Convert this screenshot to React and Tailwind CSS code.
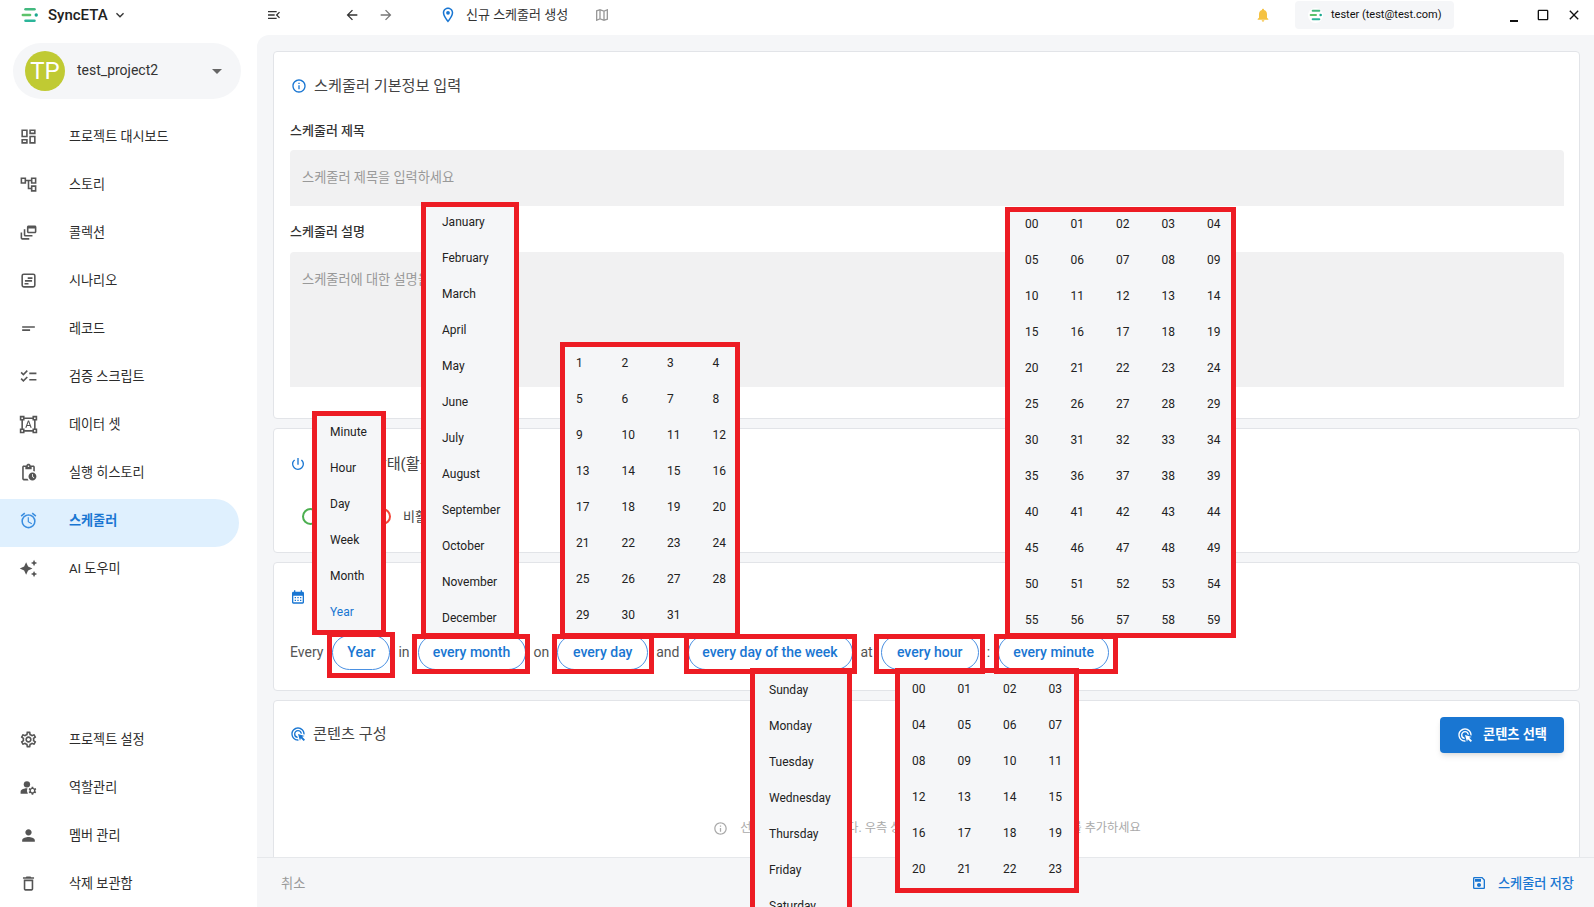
// Schedule creation screen with cron dropdowns annotated in red
import {
  MdOutlineDashboard, MdOutlineAccountTree, MdOutlineDynamicFeed, MdOutlineShortText,
  MdOutlineChecklist, MdOutlineFormatShapes, MdOutlinePendingActions, MdOutlineAlarm, MdAutoAwesome,
  MdOutlineSettings, MdManageAccounts, MdPerson, MdOutlineDelete, MdOutlineMenuOpen, MdArrowBack,
  MdArrowForward, MdOutlineLocationOn, MdOutlineMap, MdNotifications, MdCropSquare, MdClose,
  MdKeyboardArrowDown, MdArrowDropDown, MdInfoOutline, MdPowerSettingsNew, MdCalendarMonth, MdAdsClick,
  MdOutlineSave,
} from "react-icons/md";

const ScenarioIcon = ({ className }) => (
  <svg className={className} viewBox="0 0 24 24" fill="none" stroke="currentColor" strokeWidth="2">
    <rect x="4" y="4" width="16" height="16" rx="2" />
    <path d="M11 9h6M7.5 12.5h9M7 16h5" />
  </svg>
);

const NAV_TOP = [
  [MdOutlineDashboard, "프로젝트 대시보드"],
  [MdOutlineAccountTree, "스토리"],
  [MdOutlineDynamicFeed, "콜렉션"],
  [ScenarioIcon, "시나리오"],
  [MdOutlineShortText, "레코드"],
  [MdOutlineChecklist, "검증 스크립트"],
  [MdOutlineFormatShapes, "데이터 셋"],
  [MdOutlinePendingActions, "실행 히스토리"],
  [MdOutlineAlarm, "스케줄러", true],
  [MdAutoAwesome, "AI 도우미"],
];

const NAV_BOTTOM = [
  [MdOutlineSettings, "프로젝트 설정"],
  [MdManageAccounts, "역할관리"],
  [MdPerson, "멤버 관리"],
  [MdOutlineDelete, "삭제 보관함"],
];

const pad = (n) => String(n).padStart(2, "0");
const range = (from, to, fmt = String) => Array.from({ length: to - from + 1 }, (_, i) => fmt(from + i));

const Logo = ({ className }) => (
  <svg className={className} viewBox="0 0 20 18" fill="none" strokeLinecap="round" strokeWidth="3">
    <path d="M5 2.5h10" stroke="#43b97f" />
    <path d="M2 9h8" stroke="#5cc26a" />
    <circle cx="17" cy="9" r="1.9" fill="#1aa88f" />
    <path d="M5 15.5h10" stroke="#2cb59a" />
  </svg>
);

const NavItem = ({ icon: Icon, label, active }) => (
  <div className={`flex h-12 w-[239px] items-center rounded-r-3xl pb-[6px] pl-[19px] ${active ? "bg-[#dff0fe] text-[#1976d2]" : "text-[#2b2b2b]"}`}>
    <Icon className={`h-[19px] w-[19px] ${active ? "text-[#3b8ee0]" : "text-[#555]"}`} />
    <span className={`ml-[31px] pt-[2px] text-[13.1px] ${active ? "font-bold" : ""}`}>{label}</span>
  </div>
);

const Card = ({ className, children }) => (
  <section className={`shrink-0 rounded border border-[#e2e4e8] bg-white ${className}`}>{children}</section>
);

const CardTitle = ({ icon: Icon, children }) => (
  <div className="flex items-center">
    <Icon className="h-4 w-4 text-[#1976d2]" />
    <h2 className="ml-[7px] text-[15.2px] text-[#444]">{children}</h2>
  </div>
);

const Chip = ({ children, className }) => (
  <button className={`h-[35px] shrink-0 rounded-full border border-[#4a90e2] bg-white text-center text-sm font-medium text-[#1976d2] ${className}`}>
    {children}
  </button>
);

// dropdown panel wrapped in the red annotation frame
const Menu = ({ className, inner, grid, items, selected }) => (
  <div className={`absolute overflow-hidden border-[5px] border-[#ed1c24] bg-[#f5f6f8] text-xs text-[#222] ${className}`}>
    <div className={`${inner} ${grid || ""}`}>
      {items.map((it) => (
        <div key={it} className={`flex h-9 items-center ${it === selected ? "text-[#1976d2]" : ""}`}>{it}</div>
      ))}
    </div>
  </div>
);

const RedBox = ({ className }) => <div className={`absolute border-[5px] border-[#ed1c24] ${className}`} />;

const App = () => {
  return (
    <div className="relative flex h-screen w-screen flex-col overflow-hidden bg-white font-['Roboto','Noto_Sans_CJK_KR',sans-serif]">
      {/* Title bar */}
      <header className="flex h-[35px] shrink-0 items-center pb-[5px] text-[#333]">
        <div className="flex w-[257px] items-center pl-5">
          <Logo className="h-4 w-5" />
          <span className="ml-2 text-[15px] font-medium text-[#222]">SyncETA</span>
          <MdKeyboardArrowDown className="ml-1 h-4 w-4" />
        </div>
        <MdOutlineMenuOpen className="ml-[9px] h-4 w-4" />
        <MdArrowBack className="ml-[62px] h-4 w-4" />
        <MdArrowForward className="ml-[18px] h-4 w-4 text-[#777]" />
        <MdOutlineLocationOn className="ml-[45px] h-[18px] w-[18px] text-[#1976d2]" />
        <span className="ml-[9px] text-[13px] text-[#333]">신규 스케줄러 생성</span>
        <MdOutlineMap className="ml-[26px] h-4 w-4 text-[#999]" />
        <MdNotifications className="ml-auto h-4 w-4 text-[#f5c242]" />
        <div className="ml-6 flex h-7 w-[159px] items-center rounded bg-[#f5f6f8] pl-[13px]">
          <span className="flex h-[15px] w-[15px] items-center justify-center rounded-full bg-white">
            <Logo className="h-3 w-[14px]" />
          </span>
          <span className="ml-2 text-[11px] text-[#111]">tester (test@test.com)</span>
        </div>
        <div className="mr-[12px] ml-[56px] flex items-center gap-[15px] text-[#111]">
          <span className="mr-[2px] mt-3 h-[2px] w-2 bg-[#111]" />
          <MdCropSquare className="h-4 w-4" />
          <MdClose className="h-4 w-4" />
        </div>
      </header>

      <div className="flex min-h-0 flex-1">
        {/* Sidebar */}
        <aside className="flex w-[257px] shrink-0 flex-col pt-2">
          <div className="ml-[13px] flex h-14 w-[228px] shrink-0 items-center rounded-full bg-[#f5f6f8] pl-3">
            <div className="flex h-10 w-10 items-center justify-center rounded-full bg-[#c0ca33] text-2xl text-white">TP</div>
            <span className="ml-3 pb-[2px] text-sm text-[#333]">test_project2</span>
            <MdArrowDropDown className="ml-auto mr-[12px] h-6 w-6 text-[#666]" />
          </div>
          <nav className="mt-4">
            {NAV_TOP.map(([icon, label, active]) => (
              <NavItem key={label} icon={icon} label={label} active={active} />
            ))}
          </nav>
          <nav className="mt-auto -mb-[3px]">
            {NAV_BOTTOM.map(([icon, label]) => (
              <NavItem key={label} icon={icon} label={label} />
            ))}
          </nav>
        </aside>

        {/* Main */}
        <main className="flex min-w-0 flex-1 flex-col overflow-hidden rounded-tl-xl bg-[#f5f6f8]">
          <div className="flex min-h-0 flex-1 flex-col gap-[9px] overflow-hidden pl-4 pr-[14px] pt-4">
            <Card className="h-[368px] pl-4 pr-[15px] pt-[23px]">
              <div className="pl-[1px]"><CardTitle icon={MdInfoOutline}>스케줄러 기본정보 입력</CardTitle></div>
              <label className="mt-[23px] block text-[13px] font-medium text-[#333]">스케줄러 제목</label>
              <div className="mt-[10px] flex h-14 items-center rounded-t bg-[#f1f1f2] px-3 text-[13.2px] text-[#999]">스케줄러 제목을 입력하세요</div>
              <label className="mt-4 block text-[13px] font-medium text-[#333]">스케줄러 설명</label>
              <div className="mt-[10px] h-[135px] rounded-t bg-[#f1f1f2] px-3 pt-[18px] text-[13.2px] text-[#999]">스케줄러에 대한 설명을 입력하세요</div>
            </Card>

            <Card className="h-[125px] px-4 pt-6">
              <CardTitle icon={MdPowerSettingsNew}>스케줄러 상태(활성화 여부)</CardTitle>
              <div className="mt-[31px] ml-3 flex items-center text-[13px] text-[#444]">
                <span className="h-[17px] w-[17px] rounded-full border-2 border-[#4caf50]" />
                <span className="ml-2">활성</span>
                <span className="ml-[23px] h-[17px] w-[17px] rounded-full border-2 border-[#f44336]" />
                <span className="ml-[12px]">비활성</span>
              </div>
            </Card>

            <Card className="h-[129px] px-4 pt-[23px]">
              <CardTitle icon={MdCalendarMonth}>주기 설정</CardTitle>
              <div className="mt-[26px] flex items-center gap-2 text-sm text-[#555]">
                <span>Every</span>
                <Chip className="ml-px w-[58px]">Year</Chip>
                <span>in</span>
                <Chip className="w-[108px]">every month</Chip>
                <span>on</span>
                <Chip className="w-[91px]">every day</Chip>
                <span>and</span>
                <Chip className="w-[165px]">every day of the week</Chip>
                <span>at</span>
                <Chip className="w-[98px]">every hour</Chip>
                <span>:</span>
                <Chip className="w-[111px]">every minute</Chip>
              </div>
            </Card>

            <Card className="h-[220px] pl-4 pr-[15px] pt-4">
              <div className="flex items-start justify-between">
                <div className="pt-[6px]"><CardTitle icon={MdAdsClick}>콘텐츠 구성</CardTitle></div>
                <button className="flex h-9 w-[124px] items-center justify-center rounded bg-[#1976d2] text-[13.2px] font-bold text-white shadow-md">
                  <MdAdsClick className="mr-[10px] h-4 w-4" />
                  콘텐츠 선택
                </button>
              </div>
              <div className="mt-[66px] flex items-center justify-center text-[12.2px] text-[#aaa]">
                <MdInfoOutline className="mr-3 h-[15px] w-[15px] text-[#aaa]" />
                선택된 콘텐츠 없습니다. 우측 상단의 선택 버튼을 클릭하여 콘텐츠를 추가하세요
              </div>
            </Card>
          </div>

          <footer className="flex h-[50px] shrink-0 items-center justify-between border-t border-[#e6e8eb] bg-[#f5f6f8] pl-6 pr-[20px] pt-[2px] text-[13.2px]">
            <span className="text-[#999]">취소</span>
            <span className="flex items-center font-medium text-[#1976d2]">
              <MdOutlineSave className="mr-[11px] h-4 w-4" />
              스케줄러 저장
            </span>
          </footer>
        </main>
      </div>

      {/* Red annotated dropdowns */}
      <Menu className="left-[312px] top-[411px] h-[224px] w-[74px]" inner="-mt-[2px] pl-[13px]" selected="Year" items={["Minute", "Hour", "Day", "Week", "Month", "Year"]} />
      <Menu className="left-[421px] top-[202px] h-[436px] w-[98px]" inner="-mt-[3px] pl-4" items={["January", "February", "March", "April", "May", "June", "July", "August", "September", "October", "November", "December"]} />
      <Menu className="left-[560px] top-[342px] h-[296px] w-[180px]" inner="-mt-[2px] pl-[11px]" grid="grid grid-cols-[repeat(4,45.5px)]" items={range(1, 31)} />
      <Menu className="left-[1005px] top-[207px] h-[431px] w-[231px]" inner="-mt-[6px] pl-[15px]" grid="grid grid-cols-[repeat(5,45.5px)]" items={range(0, 59, pad)} />
      <Menu className="left-[750px] top-[668px] h-[245px] w-[102px]" inner="-mt-[1px] pl-[14px]" items={["Sunday", "Monday", "Tuesday", "Wednesday", "Thursday", "Friday", "Saturday"]} />
      <Menu className="left-[895px] top-[668px] h-[225px] w-[184px]" inner="-mt-[2px] pl-[12px]" grid="grid grid-cols-[repeat(4,45.5px)]" items={range(0, 23, pad)} />

      <RedBox className="left-[327px] top-[632px] h-[46px] w-[68px]" />
      <RedBox className="left-[412px] top-[634px] h-[40px] w-[118px]" />
      <RedBox className="left-[552px] top-[634px] h-[40px] w-[102px]" />
      <RedBox className="left-[684px] top-[634px] h-[40px] w-[173px]" />
      <RedBox className="left-[874px] top-[634px] h-[40px] w-[111px]" />
      <RedBox className="left-[994px] top-[634px] h-[40px] w-[124px]" />
    </div>
  );
};

export default App;
